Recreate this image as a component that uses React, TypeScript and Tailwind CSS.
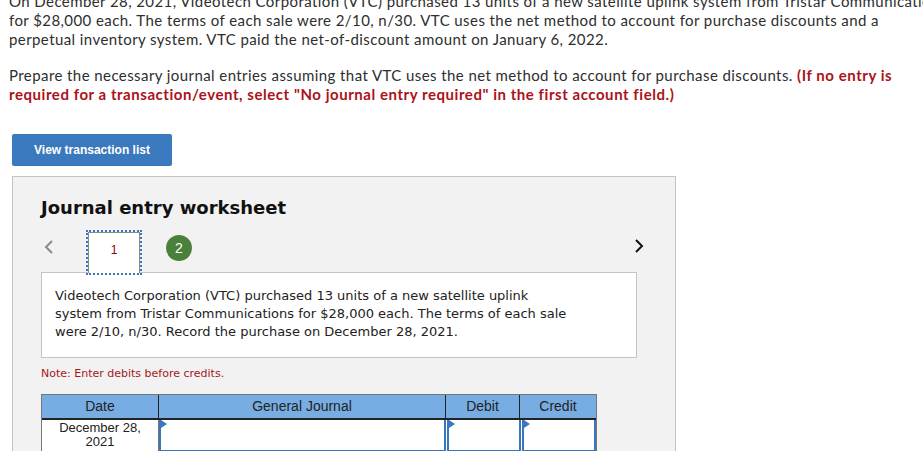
import React from "react";

const Tri = () => (
  <svg className="absolute left-0 top-0" width="6" height="10" viewBox="0 0 6 10">
    <polygon points="0,0 6,4 0,8" fill="#3a76bd" />
  </svg>
);

export default function App() {
  return (
    <div className="w-[923px] h-[451px] overflow-hidden bg-white relative">
      <div className="pl-[9px] pr-1 mt-[-8px] text-[15px] leading-[19px] tracking-[0.42px] text-[#2e2e2e] font-['Lato','Open_Sans',sans-serif] whitespace-nowrap">
        <p>On December 28, 2021, Videotech Corporation (VTC) purchased 13 units of a new satellite uplink system from Tristar Communications</p>
        <p>for $28,000 each. The terms of each sale were 2/10, n/30. VTC uses the net method to account for purchase discounts and a</p>
        <p>perpetual inventory system. VTC paid the net-of-discount amount on January 6, 2022.</p>
        <p className="mt-[17px]">
          Prepare the necessary journal entries assuming that VTC uses the net method to account for purchase discounts.{" "}
          <b className="text-[#ab1219] font-bold tracking-[0.55px]">(If no entry is</b>
        </p>
        <p className="text-[#ab1219] font-bold tracking-[0.55px]">required for a transaction/event, select "No journal entry required" in the first account field.)</p>
      </div>

      <div className="ml-[12px] mt-[30px] w-[160px] h-[32px] rounded-[2px] bg-[#3b79be] flex items-center justify-center text-white text-[12px] font-bold font-['Liberation_Sans',Arial,sans-serif]">
        View transaction list
      </div>

      <div className="ml-[12px] mt-[10px] w-[664px] h-[300px] bg-[#f2f2f2] border border-[#c4c4c4] pl-[28px] pt-[20px]">
        <h2 className="text-[18px] leading-[22px] font-bold text-[#111] font-['DejaVu_Sans',Verdana,sans-serif]">
          Journal entry worksheet
        </h2>

        <div className="mt-[11px] flex items-start h-[42px] w-[605px] relative">
          <svg className="ml-[3px] mt-[9px]" width="10" height="16" viewBox="0 0 10 16">
            <polyline points="8,2 2,8 8,14" fill="none" stroke="#8a8a8a" strokeWidth="2" />
          </svg>
          <div className="ml-[32px] w-[56px] h-[45px] border-2 border-dotted border-[#3a76bd] relative z-10">
            <div className="w-full h-full bg-white border border-b-0 border-[#8a8a8a] flex items-start justify-center pt-[8px] text-[12px] text-[#8b0000] font-['Liberation_Sans',Arial,sans-serif]">
              1
            </div>
          </div>
          <div className="ml-[24px] mt-[5px] w-[26px] h-[26px] rounded-full bg-[#4a7f3c] text-white text-[14px] flex items-center justify-center font-['Liberation_Sans',Arial,sans-serif]">
            2
          </div>
          <svg className="ml-auto mt-[8px] mr-[2px]" width="10" height="16" viewBox="0 0 10 16">
            <polyline points="2,2 8,8 2,14" fill="none" stroke="#111" strokeWidth="2" />
          </svg>
        </div>

        <div className="w-[596px] h-[86px] bg-white border border-[#c4c4c4] pl-[13px] pt-[14px] text-[13px] leading-[18px] text-[#222] font-['DejaVu_Sans',Verdana,sans-serif] whitespace-nowrap">
          <p>Videotech Corporation (VTC) purchased 13 units of a new satellite uplink</p>
          <p>system from Tristar Communications for $28,000 each. The terms of each sale</p>
          <p>were 2/10, n/30. Record the purchase on December 28, 2021.</p>
        </div>

        <p className="mt-[9px] text-[11px] leading-[14px] text-[#a5161c] font-['DejaVu_Sans',Verdana,sans-serif]">
          Note: Enter debits before credits.
        </p>

        <div className="mt-[13px] w-[556px] border border-[#777] font-['Liberation_Sans',Arial,sans-serif] text-[13px] text-[#222]">
          <div className="flex h-[25px] bg-[#78ade3] border-b-2 border-[#222] text-[14px]">
            <div className="w-[117px] flex items-center justify-center border-r border-[#222]">Date</div>
            <div className="w-[287px] flex items-center justify-center border-r border-[#222]">General Journal</div>
            <div className="w-[74px] flex items-center justify-center border-r border-[#222]">Debit</div>
            <div className="flex-1 flex items-center justify-center">Credit</div>
          </div>
          <div className="flex h-[32px] bg-white">
            <div className="w-[117px] flex flex-col items-center justify-start leading-[14px] pt-[1px] border-r border-[#777]">
              <span>December 28,</span>
              <span>2021</span>
            </div>
            <div className="w-[287px] relative border-2 border-t-0 border-[#3a76bd]"><Tri /></div>
            <div className="w-[74px] relative border-2 border-t-0 border-[#3a76bd] ml-[1px]"><Tri /></div>
            <div className="flex-1 relative border-2 border-t-0 border-[#3a76bd] ml-[1px]"><Tri /></div>
          </div>
        </div>
      </div>
    </div>
  );
}
